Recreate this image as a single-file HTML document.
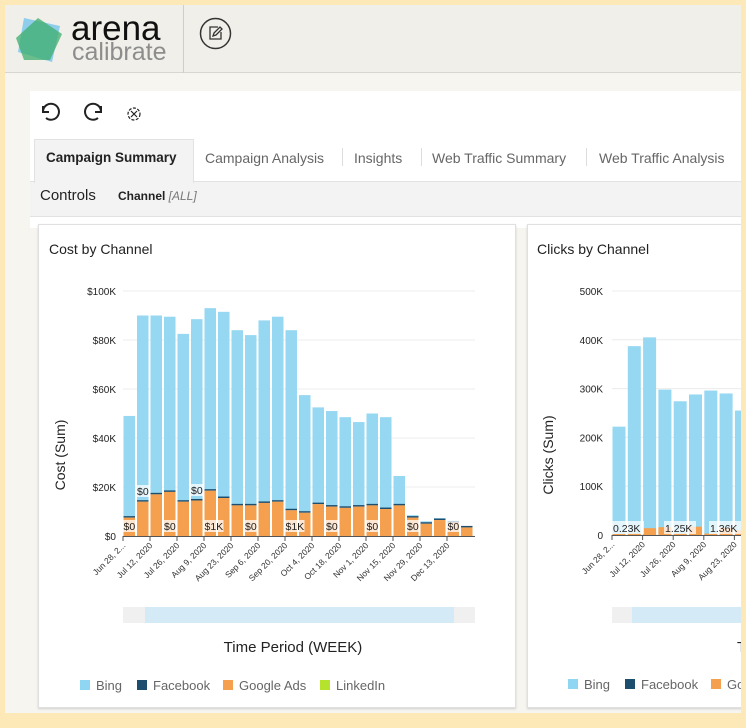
<!DOCTYPE html>
<html><head><meta charset="utf-8"><style>
*{margin:0;padding:0;box-sizing:border-box}
body{width:746px;height:728px;background:#fde9b8;position:relative;overflow:hidden;font-family:"Liberation Sans","DejaVu Sans",sans-serif;}
.abs{position:absolute}
#main{left:5px;top:5px;width:736px;height:708px;background:#f6f5f0;}
#hdr{left:5px;top:5px;width:736px;height:68px;background:#f0efe9;border-bottom:1px solid #d8d6cf;}
#card{left:30px;top:91px;width:711px;height:137px;background:#fff;}
.tab{position:absolute;top:150px;font-size:14px;color:#666;}
.panel{background:#fff;border:1px solid #e0e0e0;box-shadow:0 1px 2px rgba(0,0,0,.15)}
</style></head><body>
<div class="abs" id="main"></div>
<div class="abs" id="hdr"></div>
<div class="abs" style="left:183px;top:5px;width:1px;height:68px;background:#d0cec7"></div>
<svg class="abs" style="left:14px;top:14px" width="52" height="52" viewBox="0 0 52 52">
<polygon points="10,4 46,12 38,48 4,38" fill="#7cc7ec" opacity=".85"/>
<polygon points="2,24 24,4 48,20 36,46 10,46" fill="#3dad6c" opacity=".75"/>
</svg>
<div class="abs" style="left:71px;top:9px;font-size:35px;color:#111;line-height:40px">arena</div>
<div class="abs" style="left:72px;top:39px;font-size:25px;color:#8d8d8d;line-height:26px">calibrate</div>
<svg class="abs" style="left:199px;top:17px" width="33" height="33" viewBox="0 0 33 33"><circle cx="16.5" cy="16.5" r="15" fill="none" stroke="#333" stroke-width="1.5"/><path d="M14 19l1-3 6-6 2 2-6 6z" fill="none" stroke="#333" stroke-width="1.3"/><path d="M19 10h-8v12h11v-7" fill="none" stroke="#333" stroke-width="1.3"/></svg>
<div class="abs" id="card"></div>
<svg class="abs" style="left:38px;top:100px" width="110" height="24" viewBox="0 0 110 24">
<path d="M5 6v6h6 M5 11a8 8 0 1 1 3 7" fill="none" stroke="#222" stroke-width="2"/>
<path d="M63 6v6h-6 M63 11a8 8 0 1 0 -3 7" fill="none" stroke="#222" stroke-width="2"/>
<circle cx="96" cy="14" r="6" fill="none" stroke="#222" stroke-width="1.2" stroke-dasharray="3 1.5"/><path d="M93 11l6 6M99 11l-6 6" stroke="#222" stroke-width="1.2"/>
</svg>
<div class="abs" style="left:30px;top:181px;width:711px;height:1px;background:#e2e2e2"></div>
<div class="abs" style="left:30px;top:182px;width:711px;height:35px;background:#f3f3f3"></div>
<div class="abs" style="left:30px;top:216px;width:711px;height:1px;background:#e2e2e2"></div>
<div class="abs" style="left:34px;top:139px;width:160px;height:44px;background:#f3f3f3;border:1px solid #e2e2e2;border-bottom:none"></div>
<div class="tab" style="left:46px;color:#222;font-weight:bold;font-size:13.5px">Campaign Summary</div>
<div class="tab" style="left:205px">Campaign Analysis</div>
<div class="abs" style="left:342px;top:148px;width:1px;height:18px;background:#ddd"></div>
<div class="tab" style="left:354px">Insights</div>
<div class="abs" style="left:421px;top:148px;width:1px;height:18px;background:#ddd"></div>
<div class="tab" style="left:432px">Web Traffic Summary</div>
<div class="abs" style="left:586px;top:148px;width:1px;height:18px;background:#ddd"></div>
<div class="tab" style="left:599px">Web Traffic Analysis</div>
<div class="abs" style="left:40px;top:187px;font-size:15px;color:#222">Controls</div>
<div class="abs" style="left:118px;top:189px;font-size:12px;color:#222;font-weight:bold">Channel <span style="font-weight:normal;font-style:italic;color:#777">[ALL]</span></div>
<div class="abs panel" style="left:38px;top:224px;width:478px;height:484px"></div>
<div class="abs panel" style="left:527px;top:224px;width:230px;height:484px"></div>
<svg class="abs" style="left:0;top:0" width="746" height="728" id="ch" font-family="Liberation Sans, sans-serif">
<text x="49" y="254" font-size="14" fill="#222">Cost by Channel</text>
<text x="537" y="254" font-size="14" fill="#222">Clicks by Channel</text>
<text transform="translate(65,455) rotate(-90)" font-size="14" fill="#222" text-anchor="middle">Cost (Sum)</text>
<text transform="translate(553,455) rotate(-90)" font-size="14" fill="#222" text-anchor="middle">Clicks (Sum)</text>
<rect x="123" y="607" width="352" height="16" fill="#f0f0f0"/><rect x="145" y="607" width="309" height="16" fill="#d4eaf6"/>
<rect x="612" y="607" width="140" height="16" fill="#f0f0f0"/><rect x="632" y="607" width="120" height="16" fill="#d4eaf6"/>
<text x="293" y="652" font-size="15" fill="#222" text-anchor="middle">Time Period (WEEK)</text>
<text x="737" y="652" font-size="15" fill="#222">T</text>
<g font-size="13" fill="#666">
<rect x="80" y="680" width="10" height="10" fill="#8fd6f2"/><text x="96" y="690">Bing</text>
<rect x="137" y="680" width="10" height="10" fill="#1d4e6e"/><text x="153" y="690">Facebook</text>
<rect x="223" y="680" width="10" height="10" fill="#f5a04e"/><text x="239" y="690">Google Ads</text>
<rect x="320" y="680" width="10" height="10" fill="#b5e22c"/><text x="336" y="690">LinkedIn</text>
<rect x="568" y="679" width="10" height="10" fill="#8fd6f2"/><text x="584" y="689">Bing</text>
<rect x="625" y="679" width="10" height="10" fill="#1d4e6e"/><text x="641" y="689">Facebook</text>
<rect x="711" y="679" width="10" height="10" fill="#f5a04e"/><text x="727" y="689">Go</text>
</g>
</svg>
<script>
var s=document.getElementById('ch'),NS='http://www.w3.org/2000/svg';
function el(t,a,txt){var e=document.createElementNS(NS,t);for(var k in a)e.setAttribute(k,a[k]);if(txt)e.textContent=txt;s.appendChild(e);return e;}
var ylab=['$0','$20K','$40K','$60K','$80K','$100K'];
for(var i=0;i<6;i++){var y=536-i*49;el('line',{x1:123,x2:475,y1:y,y2:y,stroke:'#ececec'});el('text',{x:116,y:y+4,'font-size':10,'text-anchor':'end',fill:'#222'},ylab[i]);}
var tot=[49,90,90,89.5,82.5,88.5,93,91.5,84,82,88,89.5,84,57.5,52.5,51,48.5,46.5,50,48.5,24.5,8.5,6,7.3,6.3,3.5];
var org=[7.5,14,17,18,14,14.5,18.5,15.5,12.5,12.5,13.5,14,10.5,9.5,13,12,11.5,12,12.5,11,12.5,7.5,5,6.5,5.5,3.5];
for(var i=0;i<26;i++){var x=123.5+i*13.5,w=11.5,sc=2.45;
el('rect',{x:x,y:536-tot[i]*sc,width:w,height:(tot[i]-org[i])*sc,fill:'#96d7f1'});
el('rect',{x:x,y:536-org[i]*sc-1.5,width:w,height:1.5,fill:'#1d4e6e'});
el('rect',{x:x,y:536-org[i]*sc,width:w,height:org[i]*sc,fill:'#f5a04e'});}
el('line',{x1:123,x2:475,y1:536.5,y2:536.5,stroke:'#555'});
var xl=['Jun 28, 2...','Jul 12, 2020','Jul 26, 2020','Aug 9, 2020','Aug 23, 2020','Sep 6, 2020','Sep 20, 2020','Oct 4, 2020','Oct 18, 2020','Nov 1, 2020','Nov 15, 2020','Nov 29, 2020','Dec 13, 2020'];
for(var i=0;i<13;i++){var x=123+i*27;el('line',{x1:x,x2:x,y1:536,y2:541,stroke:'#555'});el('text',{transform:'translate('+(x+3)+',546) rotate(-45)','font-size':8.5,'text-anchor':'end',fill:'#333'},xl[i]);}
var dl=[[0,'$0',530],[3,'$0',530],[6,'$1K',530],[9,'$0',530],[12,'$1K',530],[15,'$0',530],[18,'$0',530],[21,'$0',530],[24,'$0',530],[1,'$0',495],[5,'$0',494]];
dl.forEach(function(d){var x=123.5+d[0]*13.5;var w=d[1].length*6+2;el('rect',{x:x-1,y:d[2]-10,width:w,height:12,fill:'#fff',opacity:.75});el('text',{x:x,y:d[2],'font-size':10.5,fill:'#222'},d[1]);});
var rl=['0','100K','200K','300K','400K','500K'];
for(var i=0;i<6;i++){var y=535-i*48.8;el('line',{x1:612,x2:746,y1:y,y2:y,stroke:'#ececec'});el('text',{x:603,y:y+4,'font-size':10,'text-anchor':'end',fill:'#222'},rl[i]);}
var rt=[222,387,405,298,274,288,296,290,255];
var ro=[2,3,14,16,3,17,3,15,10];
for(var i=0;i<9;i++){var x=612.5+i*15.3,w=13,sc=.488;
el('rect',{x:x,y:535-rt[i]*sc,width:w,height:rt[i]*sc,fill:'#96d7f1'});
el('rect',{x:x,y:535-ro[i]*sc,width:w,height:ro[i]*sc,fill:'#f5a04e'});}
el('line',{x1:612,x2:746,y1:535.5,y2:535.5,stroke:'#555'});
var rx=['Jun 28, 2...','Jul 12, 2020','Jul 26, 2020','Aug 9, 2020','Aug 23, 2020','Sep 6'];
for(var i=0;i<6;i++){var x=612+i*30.6;el('line',{x1:x,x2:x,y1:535,y2:540,stroke:'#555'});el('text',{transform:'translate('+(x+3)+',545) rotate(-45)','font-size':8.5,'text-anchor':'end',fill:'#333'},rx[i]);}
[[612,'0.23K'],[664,'1.25K'],[709,'1.36K']].forEach(function(d){el('rect',{x:d[0],y:521,width:32,height:13,fill:'#fff',opacity:.75});el('text',{x:d[0]+1,y:532,'font-size':10.5,fill:'#222'},d[1]);});
</script>
<div class="abs" style="left:741px;top:0;width:5px;height:728px;background:#fde9b8"></div>
</body></html>
